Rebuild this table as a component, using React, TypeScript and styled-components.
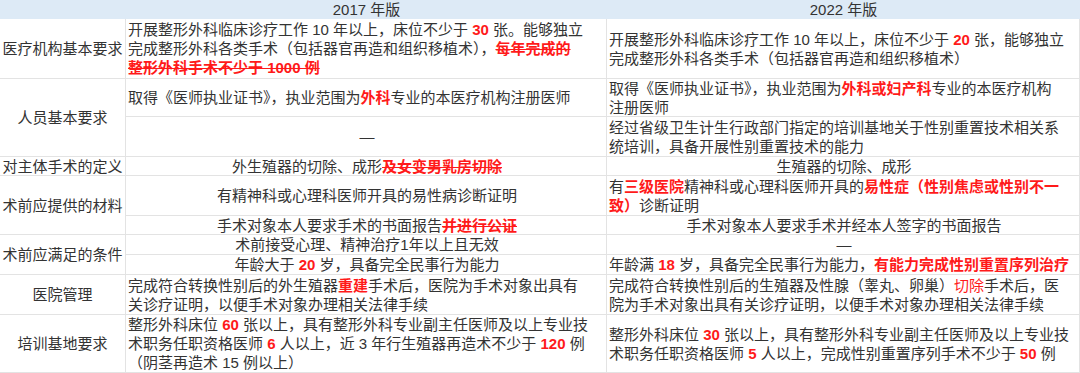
import React from "react";
import styled, { createGlobalStyle } from "styled-components";

const Global = createGlobalStyle`
  html, body { margin: 0; padding: 0; background: #ffffff; }
  body { overflow: hidden; }
`;

const Table = styled.div`
  width: 1080px;
  height: 373px;
  overflow: hidden;
  display: grid;
  grid-template-columns: 126px 481px 473px;
  grid-template-rows: 19px 60px 38px 40px 19px 40px 19px 20px 20px 40px 58px;
  font-family: "Liberation Sans", "Noto Sans CJK SC", sans-serif;
  font-size: 15px;
  line-height: 19px;
  color: #333333;
  background: #ffffff;
`;

const HeadCell = styled.div`
  background: #ddeaf6;
  display: flex;
  align-items: center;
  justify-content: center;
  white-space: nowrap;
  color: #333333;
`;

type Align = "left" | "center";

const Cell = styled.div<{ $align?: Align; $rows?: number; $clip?: boolean }>`
  display: flex;
  align-items: center;
  justify-content: ${(p) => (p.$align === "center" ? "center" : "flex-start")};
  text-align: ${(p) => (p.$align === "center" ? "center" : "left")};
  padding: 0 0 0 2px;
  border-right: 1px solid #e3e3e3;
  border-bottom: 1px solid #e3e3e3;
  white-space: nowrap;
  overflow: ${(p) => (p.$clip ? "visible" : "hidden")};
  grid-row: ${(p) => (p.$rows ? `span ${p.$rows}` : "auto")};
  box-sizing: border-box;
`;

const Label = styled(Cell)`
  justify-content: center;
  text-align: center;
  padding: 0;
`;

const Red = styled.span<{ $strike?: boolean; $light?: boolean }>`
  color: #ff1a1a;
  font-weight: ${(p) => (p.$light ? 400 : 700)};
  text-decoration: ${(p) => (p.$strike ? "line-through" : "none")};
  text-decoration-color: #ff1a1a;
  text-decoration-thickness: 1px;
`;

export default function App() {
  return (
    <>
      <Global />
      <Table>
        <HeadCell />
        <HeadCell>2017 年版</HeadCell>
        <HeadCell>2022 年版</HeadCell>

        <Label>医疗机构基本要求</Label>
        <Cell>
          <div>
            开展整形外科临床诊疗工作 10 年以上，床位不少于 <Red>30</Red> 张。能够独立
            <br />
            完成整形外科各类手术（包括器官再造和组织移植术），<Red $strike>每年完成的</Red>
            <br />
            <Red $strike>整形外科手术不少于 1000 例</Red>
          </div>
        </Cell>
        <Cell>
          <div>
            开展整形外科临床诊疗工作 10 年以上，床位不少于 <Red>20</Red> 张，能够独立
            <br />
            完成整形外科各类手术（包括器官再造和组织移植术）
          </div>
        </Cell>

        <Label $rows={2}>人员基本要求</Label>
        <Cell>
          <div>
            取得《医师执业证书》，执业范围为<Red>外科</Red>专业的本医疗机构注册医师
          </div>
        </Cell>
        <Cell>
          <div>
            取得《医师执业证书》，执业范围为<Red>外科或妇产科</Red>专业的本医疗机构
            <br />
            注册医师
          </div>
        </Cell>
        <Cell $align="center">—</Cell>
        <Cell>
          <div>
            经过省级卫生计生行政部门指定的培训基地关于性别重置技术相关系
            <br />
            统培训，具备开展性别重置技术的能力
          </div>
        </Cell>

        <Label>对主体手术的定义</Label>
        <Cell $align="center">
          <div>
            外生殖器的切除、成形<Red $strike>及女变男乳房切除</Red>
          </div>
        </Cell>
        <Cell $align="center">生殖器的切除、成形</Cell>

        <Label $rows={2}>术前应提供的材料</Label>
        <Cell $align="center">有精神科或心理科医师开具的易性病诊断证明</Cell>
        <Cell>
          <div>
            有<Red>三级医院</Red>精神科或心理科医师开具的<Red>易性症（性别焦虑或性别不一</Red>
            <br />
            <Red>致）</Red>诊断证明
          </div>
        </Cell>
        <Cell $align="center">
          <div>
            手术对象本人要求手术的书面报告<Red $strike>并进行公证</Red>
          </div>
        </Cell>
        <Cell $align="center">手术对象本人要求手术并经本人签字的书面报告</Cell>

        <Label $rows={2}>术前应满足的条件</Label>
        <Cell $align="center">术前接受心理、精神治疗1年以上且无效</Cell>
        <Cell $align="center">—</Cell>
        <Cell $align="center">
          <div>
            年龄大于 <Red>20</Red> 岁，具备完全民事行为能力
          </div>
        </Cell>
        <Cell $clip>
          <div>
            年龄满 <Red>18</Red> 岁，具备完全民事行为能力，<Red>有能力完成性别重置序列治疗</Red>
          </div>
        </Cell>

        <Label>医院管理</Label>
        <Cell>
          <div>
            完成符合转换性别后的外生殖器<Red>重建</Red>手术后，医院为手术对象出具有
            <br />
            关诊疗证明，以便手术对象办理相关法律手续
          </div>
        </Cell>
        <Cell>
          <div>
            完成符合转换性别后的生殖器及性腺（睾丸、卵巢）<Red $light>切除</Red>手术后，医
            <br />
            院为手术对象出具有关诊疗证明，以便手术对象办理相关法律手续
          </div>
        </Cell>

        <Label>培训基地要求</Label>
        <Cell>
          <div>
            整形外科床位 <Red>60</Red> 张以上，具有整形外科专业副主任医师及以上专业技
            <br />
            术职务任职资格医师 <Red>6</Red> 人以上，近 3 年行生殖器再造术不少于 <Red>120</Red> 例
            <br />
            （阴茎再造术 15 例以上）
          </div>
        </Cell>
        <Cell $clip>
          <div>
            整形外科床位 <Red>30</Red> 张以上，具有整形外科专业副主任医师及以上专业技
            <br />
            术职务任职资格医师 <Red>5</Red> 人以上，完成性别重置序列手术不少于 <Red>50</Red> 例
          </div>
        </Cell>
      </Table>
    </>
  );
}
